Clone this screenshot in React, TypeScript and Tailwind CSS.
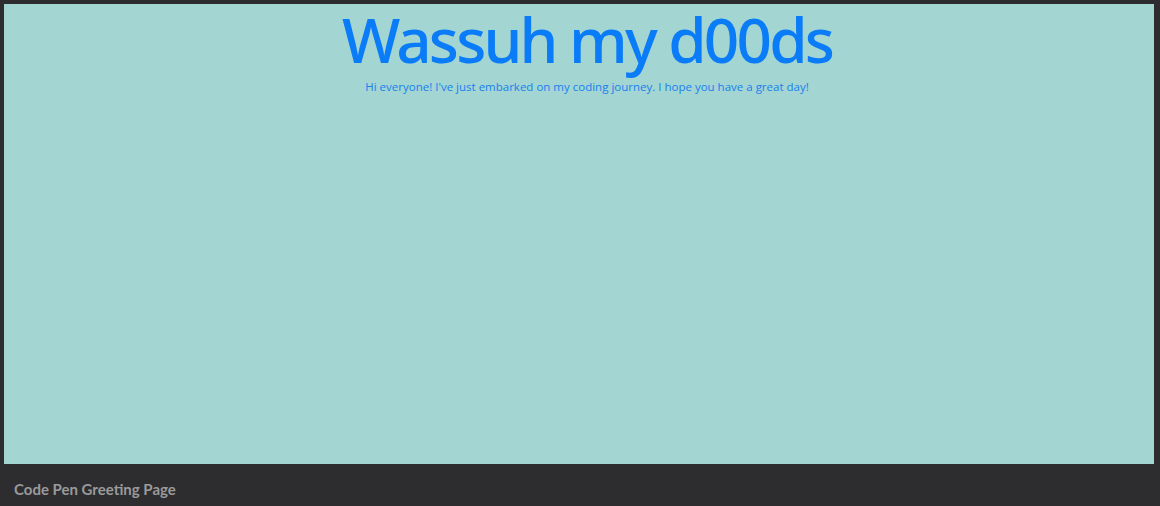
export default function App() {
  return (
    <div className="w-[1160px] h-[506px] bg-[#2d2d2f] flex flex-col overflow-hidden">
      <div className="ml-[4px] mt-[4px] w-[1150px] h-[460px] bg-[#a3d5d3] flex flex-col items-center pl-[16px]" style={{ fontFamily: '"Open Sans", "Noto Sans", sans-serif' }}>
        <h1 className="text-[62px] leading-[70px] font-medium text-[#0a7cf8] tracking-[-2.8px] pl-[2px] pr-[4px] ml-[2px]" style={{ fontFamily: '"Noto Sans", "Open Sans", sans-serif' }}>Wassuh my d00ds</h1>
        <p className="text-[11.5px] leading-[12px] text-[#1a80ee] mt-[7px]">Hi everyone! I've just embarked on my coding journey. I hope you have a great day!</p>
      </div>
      <div className="flex-1 flex items-center pl-[14px] pt-[8px]">
        <span className="text-[15px] font-bold text-[#9a9a9c]" style={{ fontFamily: 'Lato, sans-serif' }}>Code Pen Greeting Page</span>
      </div>
    </div>
  );
}
